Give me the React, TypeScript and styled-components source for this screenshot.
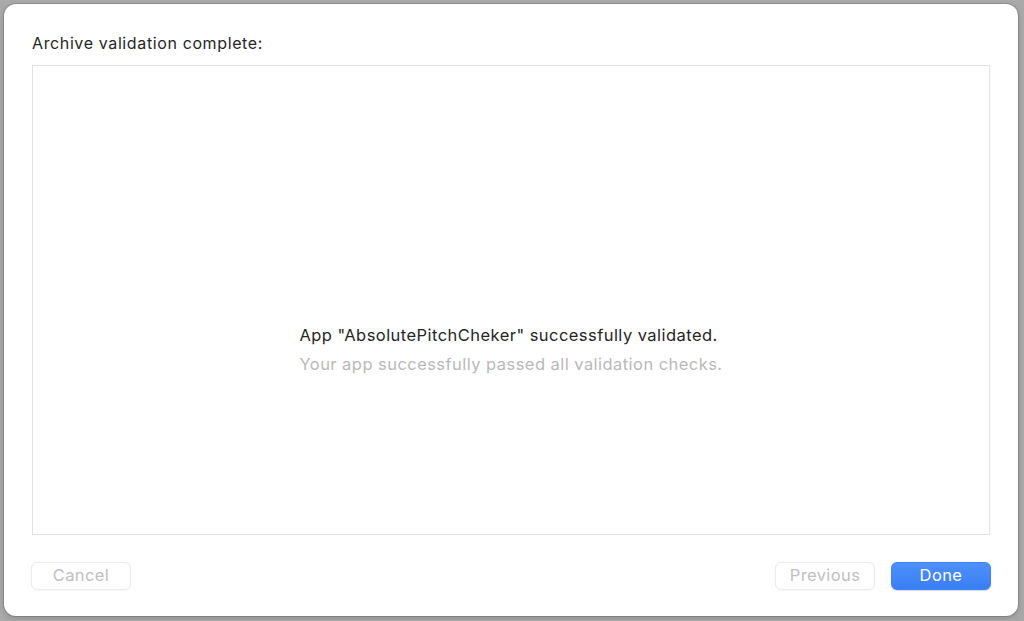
import styled, { createGlobalStyle } from 'styled-components';

const GlobalStyle = createGlobalStyle`
  html, body {
    margin: 0;
    padding: 0;
    background: #a9a9a9;
    font-family: Inter, 'Liberation Sans', Arial, sans-serif;
  }
`;

const Backdrop = styled.div`
  width: 1024px;
  height: 621px;
  padding: 4px 6px 5px 4px;
  box-sizing: border-box;
`;

const Dialog = styled.div`
  height: 100%;
  background: #ffffff;
  border-radius: 12px;
  box-shadow: 0 0 0 1px rgba(0, 0, 0, 0.12), 0 2px 6px rgba(0, 0, 0, 0.18);
  padding: 29px 28px 26px 28px;
  box-sizing: border-box;
  display: flex;
  flex-direction: column;
`;

const Title = styled.div`
  font-size: 16px;
  letter-spacing: 0.62px;
  line-height: 20px;
  color: #262626;
`;

const ResultBox = styled.div`
  margin-top: 12px;
  height: 470px;
  border: 1px solid #e2e2e2;
  box-sizing: border-box;
  display: flex;
  flex-direction: column;
  align-items: center;
  justify-content: center;
  padding-top: 98px;
`;

const Message = styled.div`
  display: flex;
  flex-direction: column;
  align-items: flex-start;
  gap: 9px;
`;

const Headline = styled.div`
  font-size: 16.5px;
  letter-spacing: 0.45px;
  line-height: 20px;
  color: #262626;
`;

const Detail = styled.div`
  font-size: 16.5px;
  letter-spacing: 0.45px;
  line-height: 20px;
  color: #b9b9b9;
`;

const Footer = styled.div`
  margin-top: 27px;
  display: flex;
  align-items: center;
  gap: 16px;
  margin-left: -1px;
  margin-right: -1px;
`;

const Spacer = styled.div`
  flex: 1;
`;

const Button = styled.button<{ $primary?: boolean }>`
  width: 100px;
  height: 28px;
  border-radius: 6px;
  font-family: inherit;
  font-size: 16.5px;
  letter-spacing: 0.4px;
  padding: 0 0 2px;
  border: 1px solid ${(p) => (p.$primary ? '#3d82f6' : '#ececec')};
  background: ${(p) => (p.$primary ? 'linear-gradient(#4d90f9, #3a7ef5)' : '#ffffff')};
  color: ${(p) => (p.$primary ? '#ffffff' : '#c0c0c0')};
  box-shadow: ${(p) => (p.$primary ? '0 0.5px 1px rgba(0,0,0,0.15)' : '0 0.5px 1px rgba(0,0,0,0.04)')};
`;

export default function App() {
  return (
    <>
      <GlobalStyle />
      <Backdrop>
        <Dialog>
          <Title>Archive validation complete:</Title>
          <ResultBox>
            <Message>
              <Headline>App "AbsolutePitchCheker" successfully validated.</Headline>
              <Detail>Your app successfully passed all validation checks.</Detail>
            </Message>
          </ResultBox>
          <Footer>
            <Button>Cancel</Button>
            <Spacer />
            <Button>Previous</Button>
            <Button $primary>Done</Button>
          </Footer>
        </Dialog>
      </Backdrop>
    </>
  );
}
